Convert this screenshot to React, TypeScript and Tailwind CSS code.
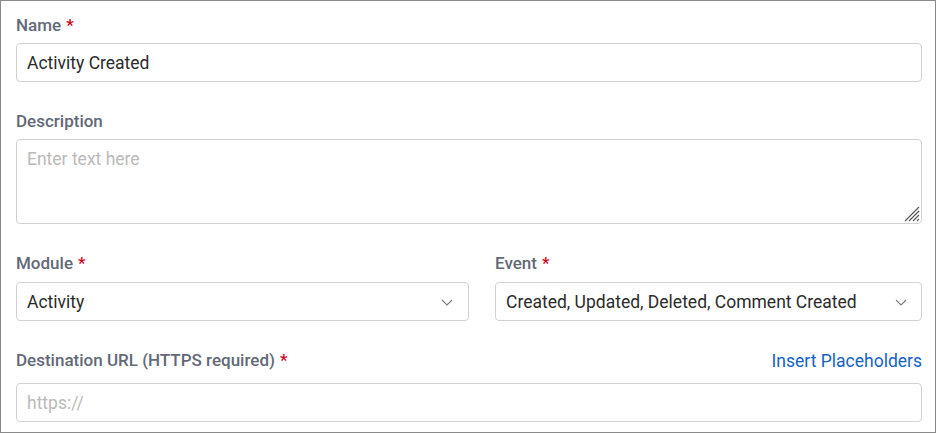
import React from "react";

const Req = () => <span className="text-[#d0021b] ml-[5px]">*</span>;

const Chevron = () => (
  <svg width="12" height="7" viewBox="0 0 12 7" fill="none" className="shrink-0">
    <path d="M1 1l5 5 5-5" stroke="#7a7a7a" strokeWidth="1.1" />
  </svg>
);

const label = "h-[20px] leading-[20px] text-[17px] font-medium text-[#626977]";
const box =
  "border border-[#d2d2d2] rounded-[4px] flex items-center pt-[2px] text-[17.5px]";

export default function App() {
  return (
    <div
      className="w-[936px] h-[433px] bg-white border border-[#8a8a8a] pl-[15px] pr-[13px] pt-[14px] box-border overflow-hidden"
      style={{ fontFamily: "Roboto, 'Liberation Sans', sans-serif" }}
    >
      <div className={label}>
        Name<Req />
      </div>
      <div className={"mt-[8px] h-[39px] pl-[10px] text-[#2b2b2b] " + box}>
        Activity Created
      </div>

      <div className={"mt-[29px] " + label}>Description</div>
      <div className="relative mt-[8px]">
        <textarea
          placeholder="Enter text here"
          className="block w-full h-[85px] border border-[#d2d2d2] rounded-[4px] px-[10px] py-[6px] text-[17.5px] text-[#2b2b2b] placeholder:text-[#bababa] outline-none resize-none"
          style={{ fontFamily: "Roboto, 'Liberation Sans', sans-serif" }}
        />
        <svg
          width="18"
          height="18"
          viewBox="0 0 18 18"
          className="absolute right-[2px] bottom-[2px] pointer-events-none"
        >
          <g stroke="#555" strokeWidth="1.1">
            <line x1="3" y1="17" x2="17" y2="3" />
            <line x1="7" y1="17" x2="17" y2="7" />
            <line x1="11" y1="17" x2="17" y2="11" />
            <line x1="15" y1="17" x2="17" y2="15" />
          </g>
        </svg>
      </div>

      <div className="mt-[29px] grid grid-cols-[453px_1fr] gap-x-[26px]">
        <div>
          <div className={label}>
            Module<Req />
          </div>
          <div className={"mt-[9px] h-[39px] justify-between pl-[10px] pr-[15px] text-[#2b2b2b] " + box}>
            <span>Activity</span>
            <Chevron />
          </div>
        </div>
        <div>
          <div className={label}>
            Event<Req />
          </div>
          <div className={"mt-[9px] h-[39px] justify-between pl-[10px] pr-[14px] text-[#2b2b2b] " + box}>
            <span>Created, Updated, Deleted, Comment Created</span>
            <Chevron />
          </div>
        </div>
      </div>

      <div className="mt-[28px] h-[24px] flex items-center justify-between">
        <div className="text-[17px] font-medium text-[#626977]">
          Destination URL (HTTPS required)<Req />
        </div>
        <div className="text-[17.5px] text-[#1463c4]">Insert Placeholders</div>
      </div>
      <div className={"mt-[10px] h-[39px] pl-[10px] text-[#bababa] " + box}>https://</div>
    </div>
  );
}
